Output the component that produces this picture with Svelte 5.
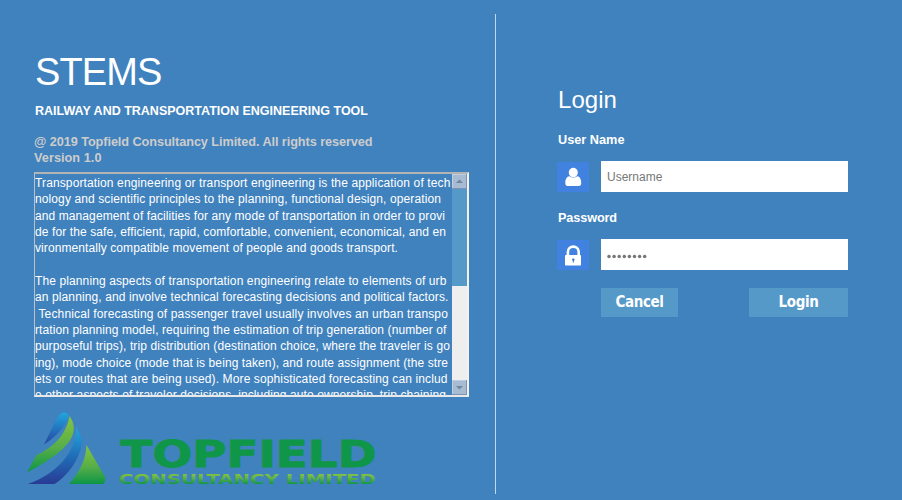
<script>
  const about = [
    ['Transportation engineering or transport engineering is the application of tech', 415.5],
    ['nology and scientific principles to the planning, functional design, operation', 406],
    ['and management of facilities for any mode of transportation in order to provi', 410],
    ['de for the safe, efficient, rapid, comfortable, convenient, economical, and en', 411],
    ['vironmentally compatible movement of people and goods transport.', 363],
    ['', 0],
    ['The planning aspects of transportation engineering relate to elements of urb', 411.5],
    ['an planning, and involve technical forecasting decisions and political factors.', 413.5],
    ['\u00a0Technical forecasting of passenger travel usually involves an urban transpo', 413],
    ['rtation planning model, requiring the estimation of trip generation (number of', 411.5],
    ['purposeful trips), trip distribution (destination choice, where the traveler is go', 415],
    ['ing), mode choice (mode that is being taken), and route assignment (the stre', 413],
    ['ets or routes that are being used). More sophisticated forecasting can includ', 412.5],
    ['e other aspects of traveler decisions, including auto ownership, trip chaining', 411]
  ];

  // Spreads a line of text over the given width.
  function fit(node, width) {
    const n = node.textContent.length;
    if (n > 1) {
      const natural = node.getBoundingClientRect().width;
      node.style.letterSpacing = `${(width - natural) / n}px`;
    }
  }
</script>

<main>
  <section class="info">
    <h1><span use:fit={126.5}>STEMS</span></h1>
    <h2><span use:fit={333}>RAILWAY AND TRANSPORTATION ENGINEERING TOOL</span></h2>
    <p class="copy">
      <span use:fit={338.5}>@ 2019 Topfield Consultancy Limited. All rights reserved</span><br />
      <span use:fit={67.5}>Version 1.0</span>
    </p>
    <div class="box">
      <div class="text">
        {#each about as [line, width]}
          <div class="line"><span use:fit={width}>{line}</span></div>
        {/each}
      </div>
      <div class="bar">
        <div class="arrow"><svg width="15" height="15"><path d="M4 9 L7.5 5.5 L11 9Z" fill="#71869f" /></svg></div>
        <div class="thumb"></div>
        <div class="track"></div>
        <div class="arrow"><svg width="15" height="15"><path d="M4 6 L7.5 9.5 L11 6Z" fill="#71869f" /></svg></div>
      </div>
    </div>
    <svg class="logo" width="360" height="80" viewBox="20 407 360 80">
      <defs>
        <linearGradient id="b1" x1="0" y1="0" x2="0" y2="1"><stop offset="0" stop-color="#20a6de" /><stop offset="1" stop-color="#2845a0" /></linearGradient>
        <linearGradient id="g1" x1="0" y1="0" x2="0" y2="1"><stop offset="0" stop-color="#86c440" /><stop offset=".55" stop-color="#58ae48" /><stop offset="1" stop-color="#0d9647" /></linearGradient>
        <linearGradient id="b2" x1="0" y1="0" x2="0" y2="1"><stop offset="0" stop-color="#20a8e0" /><stop offset=".5" stop-color="#206fb8" /><stop offset="1" stop-color="#283b94" /></linearGradient>
        <linearGradient id="gt" gradientUnits="userSpaceOnUse" x1="0" y1="473" x2="0" y2="484"><stop offset="0" stop-color="#8cc63f" /><stop offset=".4" stop-color="#66b545" /><stop offset="1" stop-color="#109648" /></linearGradient>
      </defs>
      <path d="M44 444.5 C48 437 54 423 59 415.5 C62 411.5 66.5 411.5 69 415.5 C66 426 56 437 44 444.5Z" fill="url(#b1)" />
      <path d="M69.5 416 C73 421 75 427 73 434 C69 446 56 457 27 472.5 L36.5 455 C52 448 66 436 69.5 416Z" fill="url(#g1)" />
      <path d="M76 427 L82 439 C82 456 69 475 54.5 484 L28 484 C56 474 77 452 76 427Z" fill="url(#b2)" />
      <path d="M86.5 445 L105 477 Q106.5 480 103.5 484 L69 484 C79 473 86 460 86.5 445Z" fill="url(#g1)" />
      <text class="brand" x="120.5" y="467" textLength="256" lengthAdjust="spacingAndGlyphs">TOPFIELD</text>
      <text class="sub" x="119" y="484" textLength="257" lengthAdjust="spacingAndGlyphs">CONSULTANCY LIMITED</text>
    </svg>
  </section>

  <div class="divider"></div>

  <section class="login">
    <h3><span use:fit={59}>Login</span></h3>
    <label for="user"><span use:fit={66.5}>User Name</span></label>
    <div class="row">
      <div class="icon">
        <svg width="32" height="30"><ellipse cx="16.3" cy="10.6" rx="4.5" ry="4.9" fill="#fff" /><path d="M8.3 21 C8.3 17 9.8 14.5 12.3 14.3 Q16.3 17.2 20.3 14.3 C22.8 14.5 24.2 17 24.2 21 Q24.2 24 21.8 24 H10.7 Q8.3 24 8.3 21Z" fill="#fff" /></svg>
      </div>
      <input id="user" type="text" placeholder="Username" />
    </div>
    <label for="pass"><span use:fit={59}>Password</span></label>
    <div class="row">
      <div class="icon">
        <svg width="32" height="30"><path d="M10.9 16 V12 C10.9 4.8 21.7 4.8 21.7 12 V16" fill="none" stroke="#fff" stroke-width="2.6" /><rect x="8" y="15" width="16" height="10.5" rx=".8" fill="#fff" /><circle cx="16.3" cy="19.6" r="1.2" fill="#3c6fc0" /><path d="M16.3 20V22.5" stroke="#3c6fc0" stroke-width="1" /></svg>
      </div>
      <div class="field" id="pass">
        <svg width="60" height="31">
          {#each Array(8) as _, i}<circle cx={8 + i * 5.1} cy="17.5" r="1.75" fill="#777" />{/each}
        </svg>
      </div>
    </div>
    <div class="actions">
      <button class="cancel"><span use:fit={48}>Cancel</span></button>
      <button class="go"><span use:fit={40}>Login</span></button>
    </div>
  </section>
</main>

<style>
  :global(body) { margin: 0; }
  main {
    display: flex;
    width: 902px;
    height: 500px;
    overflow: hidden;
    background: #4082be;
    color: #fff;
    font-family: 'Liberation Sans', Arial, sans-serif;
  }
  span { white-space: pre; }
  h1, h2, h3, p { margin: 0; }
  .info { width: 461px; padding-left: 34px; flex: none; }
  h1 { margin: 50px 0 0 1px; height: 44px; font-size: 38px; line-height: 44px; font-weight: 400; }
  h2 { margin: 9px 0 0 1px; font-size: 12.5px; line-height: 16px; height: 16px; }
  .copy { margin-top: 15px; height: 32px; font-size: 12.7px; line-height: 16px; font-weight: 700; color: #ccc; }
  .box {
    box-sizing: border-box;
    display: flex;
    width: 435px;
    height: 225px;
    margin-top: 6px;
    border: 2px solid #fff;
    border-width: 2px 2px 2px 1px;
    border-color: #b4b4b4 #f2f2f2 #e8e8e8 #c0c0c0;
  }
  .text { width: 417px; overflow: hidden; padding-top: 1px; box-sizing: border-box; }
  .line { height: 16.35px; line-height: 16.35px; font-size: 12px; white-space: nowrap; }
  .bar { width: 15px; display: flex; flex-direction: column; background: #eee; }
  .arrow { box-sizing: border-box; width: 15px; height: 15px; background: #a7bbd2; box-shadow: inset -1px -1px #7f93b4, inset 1px 1px #c0cfe0; }
  .arrow svg { display: block; }
  .thumb { height: 97px; background: #5599c8; }
  .track { flex: 1; background: #eee; }
  .logo { display: block; margin: 10px 0 0 -14px; }
  .brand { font-family: 'DejaVu Sans', sans-serif; font-size: 36.5px; font-weight: 700; fill: #109648; stroke: #109648; stroke-width: 0.9; }
  .sub { font-family: 'DejaVu Sans', sans-serif; font-size: 14.5px; font-weight: 700; fill: url(#gt); }
  .divider { width: 1px; height: 480px; margin-top: 14px; background: #bcdaf2; flex: none; }
  .login { padding-left: 61px; width: 291px; flex: none; }
  h3 { margin: 85px 0 0 1px; height: 29px; line-height: 29px; font-size: 24px; font-weight: 400; }
  label { display: block; margin: 18px 0 0 1px; height: 17px; line-height: 17px; font-size: 12.7px; font-weight: 700; }
  .row { display: flex; gap: 12px; margin-top: 12px; height: 31px; }
  .icon { width: 32px; height: 30px; margin-top: 1px; background: #4182e0; }
  .icon svg { display: block; }
  input, .field { box-sizing: border-box; width: 247px; height: 31px; border: 0; padding: 0 0 0 6px; background: #fff; font: 12px 'Liberation Sans', Arial, sans-serif; color: #777; }
  .field { padding: 0; }
  input::placeholder { color: #777; opacity: 1; }
  .actions { display: flex; justify-content: space-between; margin: 18px 0 0 44px; width: 247px; }
  button { border: 0; padding: 0; height: 29px; background: #5599c8; color: #fff; font: 700 15px 'DejaVu Sans Condensed', 'DejaVu Sans', sans-serif; line-height: 29px; }
  .cancel { width: 77px; }
  .go { width: 99px; }
</style>
